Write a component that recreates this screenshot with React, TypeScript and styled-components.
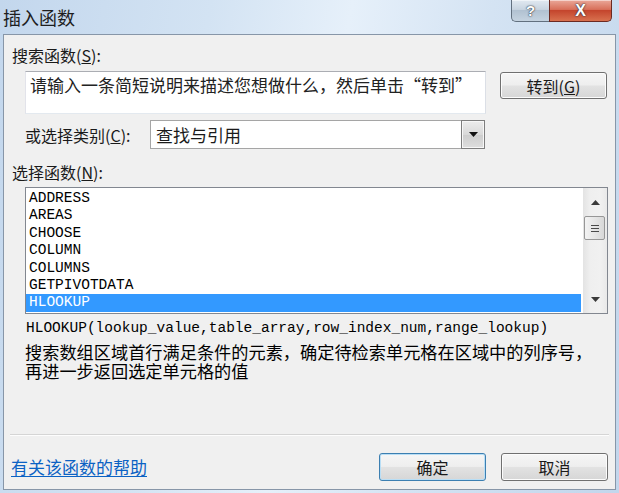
import React from "react";
import styled, { createGlobalStyle } from "styled-components";

const GlobalStyle = createGlobalStyle`
  html, body { margin: 0; padding: 0; }
  body {
    width: 619px;
    height: 493px;
    overflow: hidden;
    font-family: "Noto Sans CJK SC", "Noto Sans", sans-serif;
    color: #1a1a1a;
  }
`;

const Window = styled.div`
  width: 619px;
  height: 493px;
  box-sizing: border-box;
  display: flex;
  flex-direction: column;
  background: linear-gradient(100deg, #c3d7ed 0%, #d3e3f3 30%, #e6f0fa 50%, #d4e3f3 70%, #c2d6ec 100%);
`;

const TitleBar = styled.div`
  height: 34px;
  flex: none;
  display: flex;
  align-items: flex-start;
`;

const Title = styled.div`
  flex: 1;
  font-size: 18px;
  line-height: 20px;
  padding: 7px 0 0 3px;
  color: #1e1e1e;
`;

const Controls = styled.div`
  display: flex;
  margin-right: 7px;
`;

const CaptionButton = styled.div<{ $kind: "help" | "close" }>`
  box-sizing: border-box;
  height: 22px;
  width: ${(p) => (p.$kind === "help" ? 38 : 63)}px;
  display: flex;
  align-items: center;
  justify-content: center;
  border: 1px solid ${(p) => (p.$kind === "help" ? "#62707f" : "#6b2a22")};
  border-top: none;
  border-right: ${(p) => (p.$kind === "help" ? "none" : undefined)};
  border-radius: ${(p) => (p.$kind === "help" ? "0 0 0 5px" : "0 0 5px 0")};
  background: ${(p) =>
    p.$kind === "help"
      ? "linear-gradient(#e1e9f1, #c8d4e0 45%, #b1c1d1 50%, #c5d3e0)"
      : "linear-gradient(#eaa899, #d8705a 45%, #c4452d 50%, #d8714f)"};
  color: #fff;
  font-family: "Liberation Sans", sans-serif;
  font-weight: bold;
  font-size: ${(p) => (p.$kind === "help" ? 15 : 16)}px;
  text-shadow: 0 0 1px #2a2f3a, 0 0 2px #2a2f3a;
  box-shadow: inset 0 1px 0 rgba(255, 255, 255, 0.5);
`;

const Panel = styled.div`
  flex: 1;
  min-height: 0;
  margin: 0 3px 3px 3px;
  border: 1px solid #8796a8;
  background: #f0f0f0;
  display: flex;
  flex-direction: column;
  padding: 11px 7px 0 8px;
`;

const Label = styled.div<{ $top?: number; $indent?: number }>`
  font-size: 16px;
  line-height: 18px;
  margin-top: ${(p) => p.$top ?? 0}px;
  margin-left: ${(p) => p.$indent ?? 0}px;
  u { text-decoration: underline; text-underline-offset: 1px; }
`;

const SearchRow = styled.div`
  display: flex;
  align-items: flex-start;
  gap: 14px;
  margin: 7px 0 0 13px;
`;

const TextBox = styled.div`
  box-sizing: border-box;
  width: 461px;
  height: 43px;
  border: 1px solid #abadb3;
  border-color: #abadb3 #dbdfe6 #e3e9ef #e2e3ea;
  background: #fff;
  padding: 3px 4px;
  font-size: 17px;
  line-height: 20px;
  color: #222;
  white-space: nowrap;
  overflow: hidden;
`;

const PushButton = styled.div<{ $default?: boolean; $top?: number; $h?: number }>`
  box-sizing: border-box;
  width: 107px;
  height: ${(p) => p.$h ?? 28}px;
  margin-top: ${(p) => p.$top ?? 0}px;
  display: flex;
  align-items: center;
  justify-content: center;
  border: 1px solid ${(p) => (p.$default ? "#3c7fb1" : "#707070")};
  border-radius: 3px;
  background: linear-gradient(#f6f6f6 0%, #eeeeee 48%, #e2e2e2 52%, #d6d6d6 100%);
  box-shadow: inset 0 0 0 1px ${(p) => (p.$default ? "#b9def5" : "#fcfcfc")};
  font-size: 16px;
  line-height: 18px;
  color: #1a1a1a;
  u { text-decoration: underline; text-underline-offset: 1px; }
`;

const ComboRow = styled.div`
  display: flex;
  align-items: center;
  margin: 6px 0 0 13px;
`;

const ComboLabel = styled.div`
  width: 125px;
  font-size: 16px;
  line-height: 18px;
  u { text-decoration: underline; text-underline-offset: 1px; }
`;

const Combo = styled.div`
  box-sizing: border-box;
  width: 335px;
  height: 29px;
  border: 1px solid #a5a5a5;
  background: #fff;
  display: flex;
  align-items: center;
`;

const ComboText = styled.div`
  flex: 1;
  padding-left: 5px;
  font-size: 17px;
  line-height: 20px;
  color: #1a1a1a;
`;

const DropButton = styled.div`
  box-sizing: border-box;
  align-self: stretch;
  width: 24px;
  margin: -1px -1px -1px 0;
  border: 1px solid #7e7e7e;
  background: linear-gradient(#ededed, #d9d9d9 50%, #cdcdcd 51%, #dedede);
  box-shadow: inset 0 0 0 1px #f7f7f7;
  display: flex;
  align-items: center;
  justify-content: center;
`;

const ListBox = styled.div`
  box-sizing: border-box;
  height: 127px;
  margin: 6px 0 0 13px;
  border: 1px solid #828790;
  background: #fff;
  display: flex;
`;

const Items = styled.div`
  flex: 1;
  padding: 2px 2px 0 0;
  overflow: hidden;
`;

const Item = styled.div<{ $selected?: boolean }>`
  height: 17.4px;
  line-height: 17.4px;
  padding-left: 3px;
  font-family: "Liberation Mono", monospace;
  font-size: 14.5px;
  color: ${(p) => (p.$selected ? "#fff" : "#000")};
  background: ${(p) => (p.$selected ? "#3399ff" : "transparent")};
`;

const ScrollBar = styled.div`
  width: 24px;
  display: flex;
  flex-direction: column;
  background: linear-gradient(90deg, #e3e3e3, #efefef 30%, #f1f1f1 70%, #e9e9e9);
`;

const ArrowButton = styled.div`
  height: 28px;
  display: flex;
  align-items: center;
  justify-content: center;
  flex: none;
`;

const Thumb = styled.div`
  box-sizing: border-box;
  height: 24px;
  margin: 0 2px 0 1px;
  border: 1px solid #979797;
  border-radius: 2px;
  background: linear-gradient(90deg, #f3f3f3, #e6e6e6 50%, #d8d8d8);
  display: flex;
  align-items: center;
  justify-content: center;
  flex: none;
`;

const Track = styled.div`
  flex: 1;
`;

const Signature = styled.div`
  margin: 5px 0 0 14px;
  font-family: "Liberation Mono", monospace;
  font-size: 14.5px;
  line-height: 18px;
  color: #000;
  white-space: nowrap;
`;

const Description = styled.div`
  margin: 5px 0 0 13px;
  width: 580px;
  font-size: 17.2px;
  line-height: 19px;
  color: #000;
`;

const Spacer = styled.div`
  flex: 1;
`;

const Separator = styled.div`
  height: 0;
  margin: 0 -1px 0 -2px;
  border-top: 1px solid #d5d5d5;
  border-bottom: 1px solid #fdfdfd;
`;

const FooterRow = styled.div`
  display: flex;
  align-items: center;
  margin: 17px 0 8px -1px;
  gap: 15px;
`;

const HelpLink = styled.a`
  flex: 1;
  font-size: 17px;
  line-height: 20px;
  color: #0b62c4;
  text-decoration: underline;
  text-underline-offset: 2px;
  cursor: pointer;
`;

const Triangle = ({ up, color = "#111" }: { up?: boolean; color?: string }) => (
  <svg width="9" height="5" viewBox="0 0 9 5">
    <path d={up ? "M0 5 L4.5 0 L9 5 Z" : "M0 0 L9 0 L4.5 5 Z"} fill={color} />
  </svg>
);

const Grip = () => (
  <svg width="10" height="9" viewBox="0 0 10 9">
    <path d="M1 1.5 H9 M1 4.5 H9 M1 7.5 H9" stroke="#4a4a4a" strokeWidth="1" />
  </svg>
);

const functions = ["ADDRESS", "AREAS", "CHOOSE", "COLUMN", "COLUMNS", "GETPIVOTDATA", "HLOOKUP"];

export default function App() {
  return (
    <>
      <GlobalStyle />
      <Window>
        <TitleBar>
          <Title>插入函数</Title>
          <Controls>
            <CaptionButton $kind="help">?</CaptionButton>
            <CaptionButton $kind="close">X</CaptionButton>
          </Controls>
        </TitleBar>
        <Panel>
          <Label>
            搜索函数(<u>S</u>):
          </Label>
          <SearchRow>
            <TextBox>请输入一条简短说明来描述您想做什么，然后单击“转到”</TextBox>
            <PushButton $top={1} $h={27}>
              转到(<u>G</u>)
            </PushButton>
          </SearchRow>
          <ComboRow>
            <ComboLabel>
              或选择类别(<u>C</u>):
            </ComboLabel>
            <Combo>
              <ComboText>查找与引用</ComboText>
              <DropButton>
                <Triangle />
              </DropButton>
            </Combo>
          </ComboRow>
          <Label $top={14}>
            选择函数(<u>N</u>):
          </Label>
          <ListBox>
            <Items>
              {functions.map((f) => (
                <Item key={f} $selected={f === "HLOOKUP"}>
                  {f}
                </Item>
              ))}
            </Items>
            <ScrollBar>
              <ArrowButton>
                <Triangle up color="#3a3a3a" />
              </ArrowButton>
              <Thumb>
                <Grip />
              </Thumb>
              <Track />
              <ArrowButton>
                <Triangle color="#3a3a3a" />
              </ArrowButton>
            </ScrollBar>
          </ListBox>
          <Signature>HLOOKUP(lookup_value,table_array,row_index_num,range_lookup)</Signature>
          <Description>
            搜索数组区域首行满足条件的元素，确定待检索单元格在区域中的列序号，再进一步返回选定单元格的值
          </Description>
          <Spacer />
          <Separator />
          <FooterRow>
            <HelpLink>有关该函数的帮助</HelpLink>
            <PushButton $default>确定</PushButton>
            <PushButton>取消</PushButton>
          </FooterRow>
        </Panel>
      </Window>
    </>
  );
}
